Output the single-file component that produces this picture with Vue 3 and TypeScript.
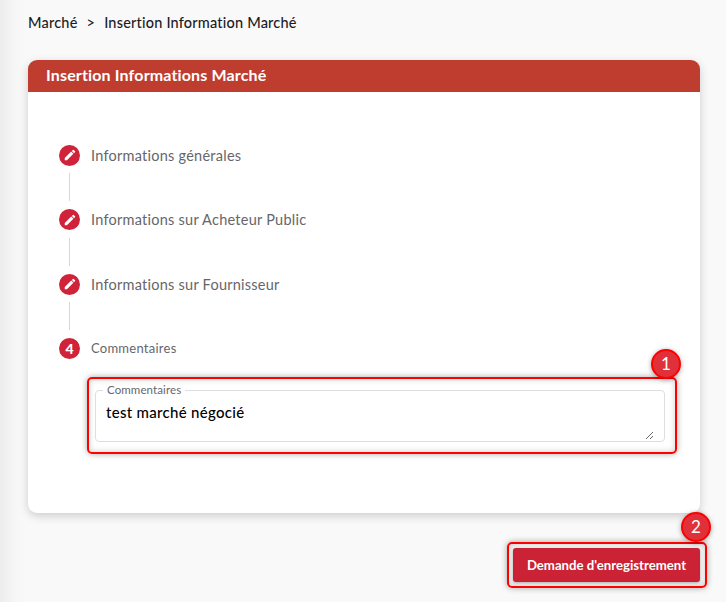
<script setup lang="ts">
interface Step { label: string; done: boolean; num: number }
const steps: Step[] = [
  { label: 'Informations générales', done: true, num: 1 },
  { label: 'Informations sur Acheteur Public', done: true, num: 2 },
  { label: 'Informations sur Fournisseur', done: true, num: 3 },
]
</script>

<template>
  <div class="page">
    <nav class="crumbs"><span>Marché</span><span class="sep">&gt;</span><span>Insertion Information Marché</span></nav>
    <section class="card">
      <header class="card-head">Insertion Informations Marché</header>
      <div class="card-body">
        <div v-for="s in steps" :key="s.num" class="step">
          <div class="step-row">
            <span class="dot">
              <svg width="14" height="14" viewBox="0 0 24 24"><path fill="#fff" d="M3 17.25V21h3.75L17.81 9.94l-3.75-3.75L3 17.25zM20.71 7.04a1 1 0 0 0 0-1.41l-2.34-2.34a1 1 0 0 0-1.41 0l-1.83 1.83 3.75 3.75 1.83-1.83z"/></svg>
            </span>
            <span class="label">{{ s.label }}</span>
          </div>
          <div class="connector"></div>
        </div>
        <div class="step-row">
          <span class="dot num">4</span>
          <span class="label small">Commentaires</span>
        </div>
        <div class="field-wrap">
          <fieldset class="field">
            <legend>Commentaires</legend>
            <textarea class="area" rows="2">test marché négocié</textarea>
          </fieldset>
          <div class="mark mark-field"></div>
          <span class="badge badge-1">1</span>
        </div>
      </div>
    </section>
    <div class="actions">
      <button class="submit" type="button">Demande d'enregistrement</button>
      <div class="mark mark-btn"></div>
      <span class="badge badge-2">2</span>
    </div>
  </div>
</template>

<style scoped>
.page {
  width: 726px;
  height: 602px;
  box-sizing: border-box;
  padding: 14px 26px 0 28px;
  overflow: hidden;
  background: linear-gradient(90deg, #ececec 0, #f6f6f6 14px, #f9f9f9 26px);
  font-family: Lato, "Open Sans", sans-serif;
  color: #1c1c24;
}
.crumbs {
  display: flex;
  gap: 9px;
  height: 18px;
  line-height: 18px;
  font-size: 14.5px;
  font-weight: 500;
  letter-spacing: 0.2px;
}
.card {
  margin-top: 28px;
  height: 453px;
  background: #fff;
  border-radius: 9px;
  box-shadow: 0 3px 10px rgba(0, 0, 0, 0.18);
}
.card-head {
  height: 32px;
  box-sizing: border-box;
  padding-left: 18px;
  line-height: 30px;
  background: #bf3d2f;
  color: #fff;
  font-size: 16px;
  font-weight: 700;
  letter-spacing: 0.15px;
  border-radius: 9px 9px 0 0;
}
.card-body {
  padding: 52px 12px 0 31px;
}
.step-row {
  display: flex;
  align-items: center;
  gap: 11px;
  height: 22px;
}
.dot {
  width: 21px;
  height: 21px;
  border-radius: 50%;
  background: #d0233a;
  display: flex;
  align-items: center;
  justify-content: center;
  color: #fff;
  flex: none;
}
.num {
  font-size: 14px;
  font-weight: 900;
}
.label {
  font-size: 14.5px;
  color: #66666a;
  letter-spacing: 0.25px;
}
.label.small {
  font-size: 13px;
  letter-spacing: 0.25px;
  position: relative;
  top: -1px;
}
.connector {
  width: 1px;
  height: 28px;
  margin: 7px 0 7.5px 10px;
  background: #d8d8d8;
}
.field-wrap {
  position: relative;
  margin: 25.5px 0 0 36px;
  width: 570px;
}
.field {
  margin: 0;
  padding: 0;
  height: 57px;
  box-sizing: border-box;
  border: 1px solid #dedede;
  border-radius: 4px;
}
.field legend {
  margin-left: 7px;
  padding: 0 4px;
  font-size: 11.5px;
  line-height: 10px;
  color: #66666a;
  letter-spacing: 0.1px;
}
.area {
  display: block;
  width: 558px;
  height: 45px;
  box-sizing: border-box;
  padding: 8px 10px 0;
  border: 0;
  outline: 0;
  background: transparent;
  resize: vertical;
  font: 500 15px Lato, sans-serif;
  letter-spacing: 0.3px;
  color: #000;
}
.mark {
  position: absolute;
  box-sizing: border-box;
  border: 2px solid #f00;
  border-radius: 5px;
  box-shadow: 0 0 6px rgba(0, 0, 0, 0.35), inset 0 0 6px rgba(0, 0, 0, 0.2);
  pointer-events: none;
}
.mark-field {
  left: -8px;
  top: -8px;
  width: 590px;
  height: 77px;
}
.badge {
  position: absolute;
  width: 30px;
  height: 30px;
  box-sizing: border-box;
  border: 2px solid #f00;
  border-radius: 50%;
  background: #e0313a;
  color: #fff;
  font-size: 17px;
  line-height: 26px;
  text-align: center;
  box-shadow: 0 1px 5px rgba(0, 0, 0, 0.35);
}
.badge-1 {
  left: 556px;
  top: -36px;
}
.actions {
  position: relative;
  margin-top: 35px;
  display: flex;
  justify-content: flex-end;
}
.submit {
  width: 187px;
  height: 34px;
  border: 0;
  border-radius: 3px;
  background: #cc2236;
  color: #fff;
  font: 700 13.2px Lato, sans-serif;
  box-shadow: 0 1px 3px rgba(0, 0, 0, 0.3);
}
.mark-btn {
  left: 479px;
  top: -6px;
  width: 200px;
  height: 46px;
}
.badge-2 {
  left: 653px;
  top: -36px;
}
</style>

<style>
html, body { margin: 0; overflow: hidden; }
</style>
